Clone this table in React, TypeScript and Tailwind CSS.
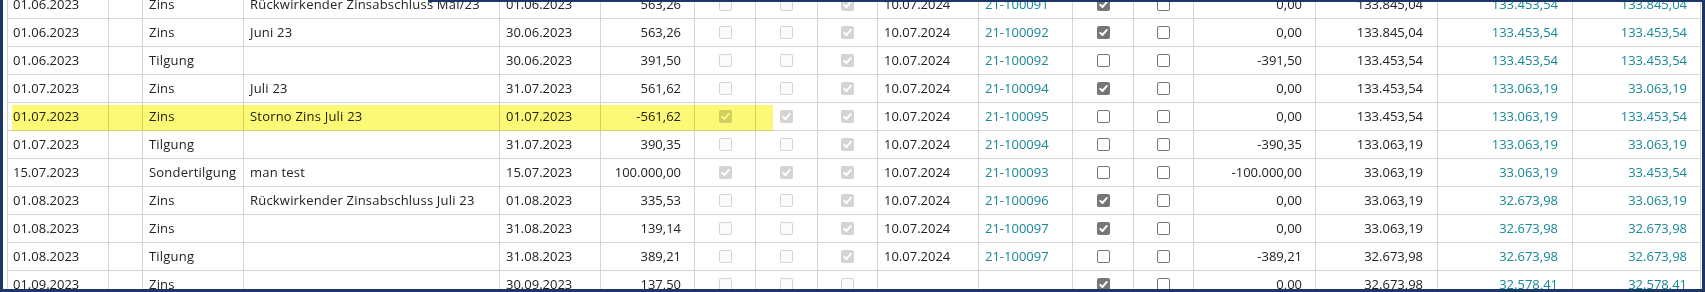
type Box = "u" | "c" | "du" | "dc";

type Row = {
  datum: string;
  typ: string;
  text: string;
  valuta: string;
  betrag: string;
  flags: [Box, Box, Box];
  buchung: string;
  beleg: string;
  gebucht: Box;
  manuell: Box;
  tilgung: string;
  saldo: string;
  sollSaldo: string;
  istSaldo: string;
};

const rows: Row[] = [
  { datum: "01.06.2023", typ: "Zins", text: "Rückwirkender Zinsabschluss Mai/23", valuta: "01.06.2023", betrag: "563,26", flags: ["du", "du", "dc"], buchung: "10.07.2024", beleg: "21-100091", gebucht: "c", manuell: "u", tilgung: "0,00", saldo: "133.845,04", sollSaldo: "133.453,54", istSaldo: "133.845,04" },
  { datum: "01.06.2023", typ: "Zins", text: "Juni 23", valuta: "30.06.2023", betrag: "563,26", flags: ["du", "du", "dc"], buchung: "10.07.2024", beleg: "21-100092", gebucht: "c", manuell: "u", tilgung: "0,00", saldo: "133.845,04", sollSaldo: "133.453,54", istSaldo: "133.453,54" },
  { datum: "01.06.2023", typ: "Tilgung", text: "", valuta: "30.06.2023", betrag: "391,50", flags: ["du", "du", "dc"], buchung: "10.07.2024", beleg: "21-100092", gebucht: "u", manuell: "u", tilgung: "-391,50", saldo: "133.453,54", sollSaldo: "133.453,54", istSaldo: "133.453,54" },
  { datum: "01.07.2023", typ: "Zins", text: "Juli 23", valuta: "31.07.2023", betrag: "561,62", flags: ["du", "du", "dc"], buchung: "10.07.2024", beleg: "21-100094", gebucht: "c", manuell: "u", tilgung: "0,00", saldo: "133.453,54", sollSaldo: "133.063,19", istSaldo: "33.063,19" },
  { datum: "01.07.2023", typ: "Zins", text: "Storno Zins Juli 23", valuta: "01.07.2023", betrag: "-561,62", flags: ["dc", "dc", "dc"], buchung: "10.07.2024", beleg: "21-100095", gebucht: "u", manuell: "u", tilgung: "0,00", saldo: "133.453,54", sollSaldo: "133.063,19", istSaldo: "133.453,54" },
  { datum: "01.07.2023", typ: "Tilgung", text: "", valuta: "31.07.2023", betrag: "390,35", flags: ["du", "du", "dc"], buchung: "10.07.2024", beleg: "21-100094", gebucht: "u", manuell: "u", tilgung: "-390,35", saldo: "133.063,19", sollSaldo: "133.063,19", istSaldo: "33.063,19" },
  { datum: "15.07.2023", typ: "Sondertilgung", text: "man test", valuta: "15.07.2023", betrag: "100.000,00", flags: ["dc", "dc", "dc"], buchung: "10.07.2024", beleg: "21-100093", gebucht: "u", manuell: "u", tilgung: "-100.000,00", saldo: "33.063,19", sollSaldo: "33.063,19", istSaldo: "33.453,54" },
  { datum: "01.08.2023", typ: "Zins", text: "Rückwirkender Zinsabschluss Juli 23", valuta: "01.08.2023", betrag: "335,53", flags: ["du", "du", "dc"], buchung: "10.07.2024", beleg: "21-100096", gebucht: "c", manuell: "u", tilgung: "0,00", saldo: "33.063,19", sollSaldo: "32.673,98", istSaldo: "33.063,19" },
  { datum: "01.08.2023", typ: "Zins", text: "", valuta: "31.08.2023", betrag: "139,14", flags: ["du", "du", "dc"], buchung: "10.07.2024", beleg: "21-100097", gebucht: "c", manuell: "u", tilgung: "0,00", saldo: "33.063,19", sollSaldo: "32.673,98", istSaldo: "32.673,98" },
  { datum: "01.08.2023", typ: "Tilgung", text: "", valuta: "31.08.2023", betrag: "389,21", flags: ["du", "du", "dc"], buchung: "10.07.2024", beleg: "21-100097", gebucht: "u", manuell: "u", tilgung: "-389,21", saldo: "32.673,98", sollSaldo: "32.673,98", istSaldo: "32.673,98" },
  { datum: "01.09.2023", typ: "Zins", text: "", valuta: "30.09.2023", betrag: "137,50", flags: ["du", "du", "du"], buchung: "", beleg: "", gebucht: "c", manuell: "u", tilgung: "0,00", saldo: "32.673,98", sollSaldo: "32.578,41", istSaldo: "32.578,41" },
];

const Check = ({ kind }: { kind: Box }) => {
  const base = "w-[13px] h-[13px] rounded-[2px] flex items-center justify-center";
  if (kind === "u") return <span className={`${base} border border-[#767676] bg-white`} />;
  if (kind === "du") return <span className={`${base} border border-[#d3d3d3] bg-[#fbfbfb]`} />;
  const bg = kind === "c" ? "bg-[#767676]" : "bg-[#d4d4d4]";
  return (
    <span className={`${base} ${bg}`}>
      <svg width="13" height="13" viewBox="0 0 13 13" fill="none">
        <path d="M3.2 6.8 L5.4 9 L9.9 3.9" stroke="white" strokeWidth="1.9" strokeLinecap="round" strokeLinejoin="round" />
      </svg>
    </span>
  );
};

const cell = "border-l border-b border-[#d5d5d8] flex items-center overflow-hidden whitespace-nowrap";
const left = `${cell} pl-[6px]`;
const words = `${left} tracking-[0.2px]`;
const right = `${cell} justify-end pr-[13px]`;
const box = `${cell} justify-center`;

const App = () => {
  return (
    <div className="relative w-[1705px] h-[292px] overflow-hidden bg-white border-l-[3px] border-r-[3px] border-b-[3px] border-[#1c3766] pl-[4px] pr-[1px] font-['Open_Sans',sans-serif] text-[13px] text-[#222]">
      <div className="-mt-[9px]">
        {rows.map((r, i) => (
          <div
            key={i}
            className="grid grid-cols-[101px_34px_101px_256px_101px_94px_61px_62px_60px_101px_94px_61px_60px_122px_122px_135px_129px] h-[28px]"
          >
            <div className={`${cell} pl-[5px]`}>{r.datum}</div>
            <div className={cell} />
            <div className={words}>{r.typ}</div>
            <div className={words}>{r.text}</div>
            <div className={left}>{r.valuta}</div>
            <div className={right}>{r.betrag}</div>
            {r.flags.map((f, j) => (
              <div key={j} className={box}>
                <Check kind={f} />
              </div>
            ))}
            <div className={left}>{r.buchung}</div>
            <div className={`${left} text-[#168896]`}>{r.beleg}</div>
            <div className={box}>
              <Check kind={r.gebucht} />
            </div>
            <div className={box}>
              <Check kind={r.manuell} />
            </div>
            <div className={right}>{r.tilgung}</div>
            <div className={`${right} pr-[14px]`}>{r.saldo}</div>
            <div className={`${right} pr-[14px] text-[#168896]`}>{r.sollSaldo}</div>
            <div className={`${right} pr-[7px] border-r text-[#168896]`}>{r.istSaldo}</div>
          </div>
        ))}
      </div>

      {/* marker highlight over the storno row */}
      <div className="absolute left-[9px] top-[105px] w-[761px] h-[26px] bg-[#fbf976] mix-blend-multiply pointer-events-none" />
      <div className="absolute left-[425px] top-0 right-0 h-[2px] bg-[#1c3766]" />
    </div>
  );
};

export default App;
